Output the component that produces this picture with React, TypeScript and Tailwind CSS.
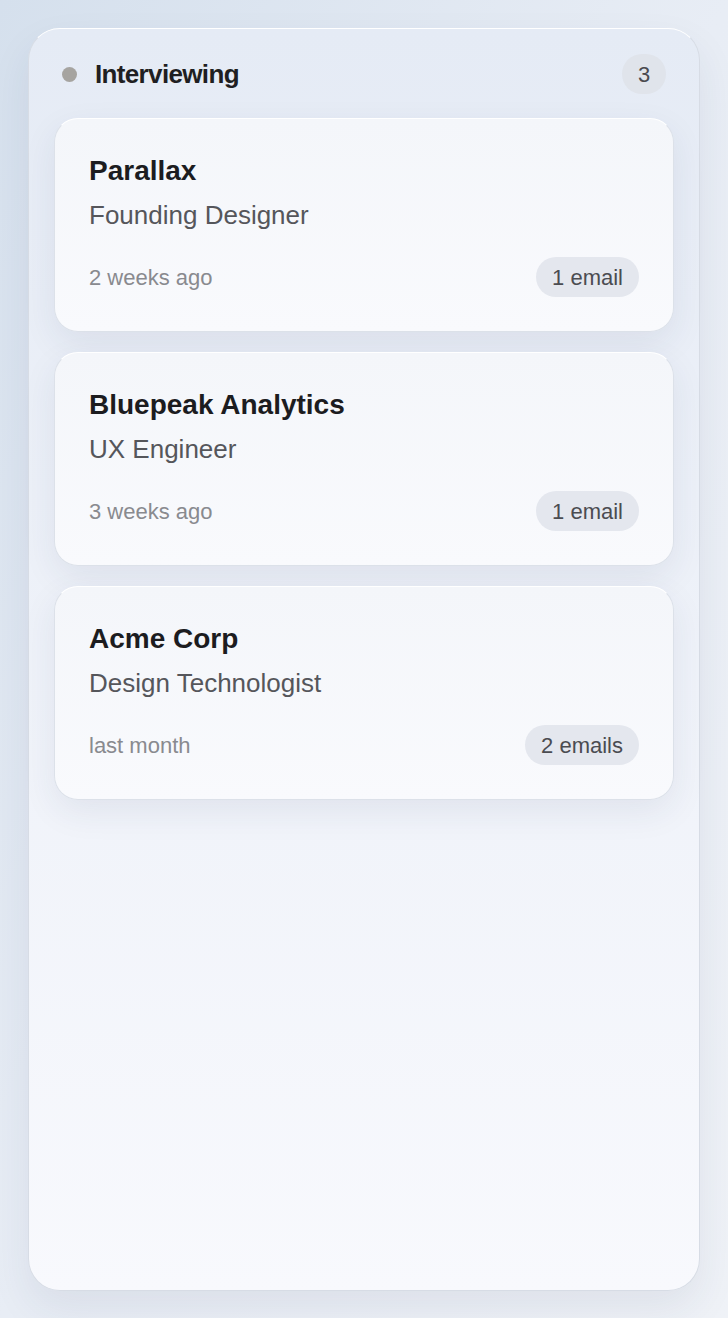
const jobs = [
  { company: 'Parallax', role: 'Founding Designer', when: '2 weeks ago', emails: '1 email' },
  { company: 'Bluepeak Analytics', role: 'UX Engineer', when: '3 weeks ago', emails: '1 email' },
  { company: 'Acme Corp', role: 'Design Technologist', when: 'last month', emails: '2 emails' },
]

const JobCard = ({ company, role, when, emails }: (typeof jobs)[number]) => {
  return (
    <div className="rounded-[24px] border border-[#dce1e9] border-t-white bg-gradient-to-b from-[#f4f6fa] to-[#f9fafd] px-[34px] pt-[33px] pb-[34px] shadow-[0_12px_34px_rgba(40,55,90,0.08)]">
      <h3 className="text-[28px] leading-[38px] font-bold text-[#1c1c1f]">{company}</h3>
      <p className="mt-[7px] text-[26px] leading-[36px] text-[#55565b]">{role}</p>
      <div className="mt-6 flex items-center justify-between">
        <span className="text-[22px] text-[#898a8f]">{when}</span>
        <span className="flex h-10 items-center rounded-full bg-[#e4e7ee] px-4 text-[22px] text-[#4b4c51]">
          {emails}
        </span>
      </div>
    </div>
  )
}

export default function App() {
  return (
    <div
      className="flex h-screen flex-col bg-gradient-to-br from-[#d5e0ed] via-[#e8edf5] to-[#eff2f7] px-[28px] pt-[28px] pb-[27px]"
      style={{ fontFamily: '"Liberation Sans", Arial, sans-serif' }}
    >
      <section className="flex flex-1 flex-col rounded-[32px] border border-[#d7dce5] border-t-white bg-gradient-to-b from-[#e5ebf5] to-[#f8f9fd] p-[25px] shadow-[0_18px_40px_rgba(40,55,90,0.08)]">
        <header className="flex h-10 items-center justify-between px-2">
          <div className="flex items-center gap-[18px]">
            <span className="h-[15px] w-[15px] rounded-full bg-[#a6a4a0]" />
            <h2 className="text-[26px] font-bold tracking-tight text-[#1f1f22]">Interviewing</h2>
          </div>
          <span className="flex h-10 w-11 items-center justify-center rounded-full bg-[#e0e4eb] text-[22px] text-[#4a4a4f]">
            3
          </span>
        </header>

        <div className="mt-6 flex flex-col gap-5">
          {jobs.map((job) => (
            <JobCard key={job.company} {...job} />
          ))}
        </div>
      </section>
    </div>
  )
}
